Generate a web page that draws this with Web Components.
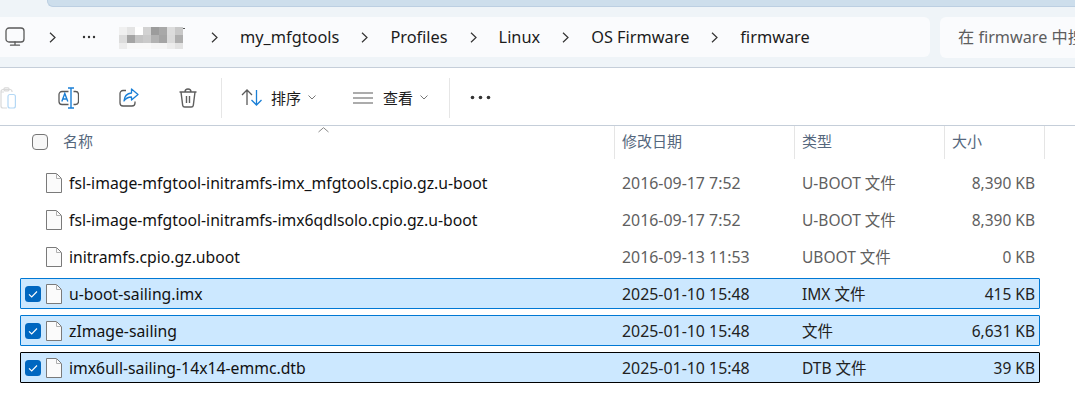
<!DOCTYPE html>
<html lang="zh">
<head>
<meta charset="utf-8">
<title>firmware</title>
<style>
    html, body { margin: 0; padding: 0; background: #fff; overflow: hidden; }
    body { width: 1075px; height: 420px; font-family: "Noto Sans", "Noto Sans CJK SC", sans-serif; }
</style>
</head>
<body>
<explorer-nav>
    <crumb-bar>
        <svg slot="home" width="20" height="20" viewBox="0 0 20 20" fill="none" stroke="#5a5a5a" stroke-width="1.3"><rect x="1" y="1" width="18" height="14" rx="3"/><path d="M10 15v3M5.5 18.2h9" stroke-linecap="round"/></svg>
        <bar-chevron></bar-chevron>
        <svg width="18" height="4" viewBox="-4 0 18 4" fill="#333"><circle cx="2" cy="2" r="1.2"/><circle cx="7" cy="2" r="1.2"/><circle cx="12" cy="2" r="1.2"/></svg>
        <blur-patch></blur-patch>
        <bar-chevron></bar-chevron>
        <span>my_mfgtools</span>
        <bar-chevron></bar-chevron>
        <span>Profiles</span>
        <bar-chevron></bar-chevron>
        <span>Linux</span>
        <bar-chevron></bar-chevron>
        <span>OS Firmware</span>
        <bar-chevron></bar-chevron>
        <span>firmware</span>
    </crumb-bar>
    <search-box>在 firmware 中搜索</search-box>
</explorer-nav>

<explorer-toolbar>
    <tool-btn>
        <svg width="17" height="22" viewBox="5 0 17 22" fill="none" stroke-width="1.2"><path d="M6 5h3M17 5V4.5A2 2 0 0 0 15 2.5H8a2 2 0 0 0-2 2V19a2 2 0 0 0 2 2h4" stroke="#d9d9d9"/><rect x="9" y="0.8" width="5" height="3" rx="1" stroke="#d9d9d9"/><rect x="14" y="7.5" width="7.4" height="13.5" rx="2" stroke="#b4d8f5" transform="translate(-1 0)"/></svg>
    </tool-btn>
    <tool-btn gap="41">
        <svg width="21" height="22" viewBox="0 0 21 22" fill="none" stroke-width="1.3"><path d="M10.500 4.500H4a3 3 0 0 0-3 3v7a3 3 0 0 0 3 3h6.500M15.500 4.500h2a3 3 0 0 1 3 3v7a3 3 0 0 1-3 3h-2" stroke="#5a5a5a"/><path d="M10 1h6M13 1v20M10 21h6M3.800 14.500l3-8 3 8M4.800 12h4" stroke="#1a7fd6" stroke-width="1.400"/></svg>
    </tool-btn>
    <tool-btn gap="40">
        <svg width="20" height="19" viewBox="0 0 20 19" fill="none" stroke-width="1.3"><path d="M7 2.500H4a3 3 0 0 0-3 3V15a3 3 0 0 0 3 3h9a3 3 0 0 0 3-3v-1.500" stroke="#5a5a5a"/><path d="M12.500 1l6.500 5.500-6.500 5.500V9C9 9 7 10 5 13c.300-4.500 3-7.500 7.500-8z" stroke="#1a7fd6" stroke-linejoin="round"/></svg>
    </tool-btn>
    <tool-btn gap="40">
        <svg width="18" height="20" viewBox="0 0 18 20" fill="none" stroke="#5f5f5f" stroke-width="1.400"><path d="M.5 4h17M6 4c0-4 6-4 6 0M2 4l1.700 13.300a2 2 0 0 0 2 1.700h6.600a2 2 0 0 0 2-1.700L16 4M7.500 8v7M10.500 8v7"/></svg>
    </tool-btn>
    <tool-sep gap="24"></tool-sep>
    <tool-btn gap="19" label="排序" lm="8" caret>
        <svg width="22" height="17" viewBox="0 0 22 17" fill="none" stroke-width="1.300"><path d="M6 1v15M1 6l5-5 5 5" stroke="#5a5a5a"/><path d="M15.500 1v15M10.500 11l5 5 5-5" stroke="#1a7fd6"/></svg>
    </tool-btn>
    <tool-btn gap="37" label="查看" lm="10" caret>
        <svg width="20" height="12" viewBox="0 0 20 12" fill="none" stroke="#5a5a5a" stroke-width="1.200"><path d="M0 1h20M0 6h20M0 11h20"/></svg>
    </tool-btn>
    <tool-sep gap="21"></tool-sep>
    <tool-btn gap="20">
        <svg width="21" height="5" viewBox="0 0 21 5" fill="#333"><circle cx="2.500" cy="2.500" r="1.800"/><circle cx="10.500" cy="2.500" r="1.800"/><circle cx="18.500" cy="2.500" r="1.800"/></svg>
    </tool-btn>
</explorer-toolbar>

<list-header></list-header>

<file-list>
    <file-row name="fsl-image-mfgtool-initramfs-imx_mfgtools.cpio.gz.u-boot" date="2016-09-17 7:52" kind="U-BOOT 文件" size="8,390 KB"></file-row>
    <file-row name="fsl-image-mfgtool-initramfs-imx6qdlsolo.cpio.gz.u-boot" date="2016-09-17 7:52" kind="U-BOOT 文件" size="8,390 KB"></file-row>
    <file-row name="initramfs.cpio.gz.uboot" date="2016-09-13 11:53" kind="UBOOT 文件" size="0 KB"></file-row>
    <file-row selected name="u-boot-sailing.imx" date="2025-01-10 15:48" kind="IMX 文件" size="415 KB"></file-row>
    <file-row selected name="zImage-sailing" date="2025-01-10 15:48" kind="文件" size="6,631 KB"></file-row>
    <file-row selected focused name="imx6ull-sailing-14x14-emmc.dtb" date="2025-01-10 15:48" kind="DTB 文件" size="39 KB"></file-row>
</file-list>

<script>
const FONT = '"Noto Sans", "Noto Sans CJK SC", sans-serif';

class ExplorerNav extends HTMLElement {
    constructor() {
        super();
        this.attachShadow({ mode: 'open' });
        this.shadowRoot.innerHTML = `
            <style>
                :host { display: block; height: 68px; box-sizing: border-box; background: #eff4f8; border-bottom: 1px solid #c5ced9; }
                .strip { height: 7px; margin-left: 47px; box-sizing: border-box; background: #cddeec; border-bottom: 1px solid #bccfe2; border-left: 1px solid #bccfe2; border-bottom-left-radius: 6px; }
                .row { display: flex; gap: 10px; margin-top: 10px; }
            </style>
            <div class="strip"></div>
            <div class="row"><slot></slot></div>
        `;
    }
}

class CrumbBar extends HTMLElement {
    constructor() {
        super();
        this.attachShadow({ mode: 'open' });
        this.shadowRoot.innerHTML = `
            <style>
                :host { display: flex; align-items: center; width: 930px; height: 40px; box-sizing: border-box; padding-left: 5px; background: #fafbfd; border-radius: 0 6px 6px 0; font: 16.32px ${FONT}; color: #1c1c1c; }
                .home { display: flex; margin-right: 24px; }
                .items { display: flex; align-items: center; gap: 22px; }
            </style>
            <div class="home"><slot name="home"></slot></div>
            <div class="items"><slot></slot></div>
        `;
    }
}

class BarChevron extends HTMLElement {
    constructor() {
        super();
        this.attachShadow({ mode: 'open' });
        this.shadowRoot.innerHTML = `
            <style>:host { display: flex; }</style>
            <svg width="7" height="11" viewBox="0 0 7 11" fill="none" stroke="#333" stroke-width="1.200"><path d="M1 .8l5 4.700-5 4.700"/></svg>
        `;
    }
}

// mosaic over the hidden folder name
class BlurPatch extends HTMLElement {
    constructor() {
        super();
        this.attachShadow({ mode: 'open' });
        const cells = [
            ['#f0f0f0','#e4e4e4','#fff','#d2d2d2','#9c9c9c','#a8a8a8','#dcdcdc','#c8c8c8'],
            ['#dcdcdc','#a4a4a4','#c4c4c4','#cacaca','#b2b2b2','#a4a4a4','#dadada','#aeaeae'],
            ['#ececec','#f8f8f8','#f8f8f8','#f8f8f8','#f4f4f4','#f4f4f4','#ececec','#e2e2e2'],
        ];
        const rects = cells.map((row, y) => row.map((c, x) => `<rect x="${x * 8}" y="${y * 8}" width="8" height="8" fill="${c}"/>`).join('')).join('');
        this.shadowRoot.innerHTML = `
            <style>:host { display: flex; width: 71px; padding-top: 1px; }</style>
            <svg width="71" height="22" viewBox="-1 0 71 22" shape-rendering="crispEdges">${rects}<rect x="64" y="1" width="2" height="1" fill="#555"/></svg>
        `;
    }
}

class SearchBox extends HTMLElement {
    constructor() {
        super();
        this.attachShadow({ mode: 'open' });
        this.shadowRoot.innerHTML = `
            <style>
                :host { display: block; flex: 1; min-width: 0; height: 41px; box-sizing: border-box; padding-left: 18px; background: #fafbfd; border-radius: 6px 0 0 6px; font: 16.2px/40px ${FONT}; color: #5d5d5d; white-space: nowrap; overflow: hidden; }
            </style>
            <slot></slot>
        `;
    }
}

class ExplorerToolbar extends HTMLElement {
    constructor() {
        super();
        this.attachShadow({ mode: 'open' });
        this.shadowRoot.innerHTML = `
            <style>
                :host { display: flex; align-items: center; height: 58px; padding-top: 2px; box-sizing: border-box; border-bottom: 1px solid #c5ced9; }
            </style>
            <slot></slot>
        `;
    }
}

class ToolBtn extends HTMLElement {
    constructor() {
        super();
        this.attachShadow({ mode: 'open' });
        const label = this.getAttribute('label');
        const caret = this.hasAttribute('caret');
        this.shadowRoot.innerHTML = `
            <style>
                :host { display: flex; align-items: center; margin-left: ${this.getAttribute('gap') || 0}px; font: 15px ${FONT}; color: #1c1c1c; }
                .label { margin-left: ${this.getAttribute('lm') || 9}px; }
                svg { margin-left: 7px; }
                slot::slotted(svg) { display: block; }
            </style>
            <slot></slot>
            ${label ? `<span class="label">${label}</span>` : ''}
            ${caret ? `<svg width="8" height="5" viewBox="0 0 8 5" fill="none" stroke="#777" stroke-width="1"><path d="M.5.5L4 4 7.500.5"/></svg>` : ''}
        `;
    }
}

class ToolSep extends HTMLElement {
    constructor() {
        super();
        this.attachShadow({ mode: 'open' });
        this.shadowRoot.innerHTML = `
            <style>:host { display: block; width: 1px; height: 40px; margin-left: ${this.getAttribute('gap') || 0}px; background: #e6e6e6; }</style>
        `;
    }
}

class ListHeader extends HTMLElement {
    constructor() {
        super();
        this.attachShadow({ mode: 'open' });
        this.shadowRoot.innerHTML = `
            <style>
                :host { display: grid; position: relative; grid-template-columns: 614px 180px 150px 100px 1fr; height: 33px; font: 15px/31px ${FONT}; color: #55677d; }
                .cell { padding-left: 7px; border-left: 1px solid #e5e5e5; }
                .first { display: flex; align-items: flex-start; padding-left: 32px; }
                .box { width: 14px; height: 14px; border: 1px solid #767676; border-radius: 4px; background: #f7f7f7; margin: 8px 15px 0 0; }
                .sort { position: absolute; left: 318px; top: 1px; }
            </style>
            <div class="first"><div class="box"></div>名称</div>
            <div class="cell">修改日期</div>
            <div class="cell">类型</div>
            <div class="cell">大小</div>
            <div class="cell"></div>
            <svg class="sort" width="11" height="6" viewBox="0 0 11 6" fill="none" stroke="#888" stroke-width="1"><path d="M.5 5L5.500 .7 10.500 5"/></svg>
        `;
    }
}

class FileList extends HTMLElement {
    constructor() {
        super();
        this.attachShadow({ mode: 'open' });
        this.shadowRoot.innerHTML = `
            <style>:host { display: flex; flex-direction: column; gap: 6px; margin-left: 20px; width: 1020px; padding-top: 8px; }</style>
            <slot></slot>
        `;
    }
}

class FileRow extends HTMLElement {
    constructor() {
        super();
        this.attachShadow({ mode: 'open' });
        const a = n => this.getAttribute(n);
        const selected = this.hasAttribute('selected');
        this.shadowRoot.innerHTML = `
            <style>
                :host { display: grid; grid-template-columns: 601px 180px 150px 1fr; align-items: center; height: 31px; box-sizing: border-box; border: 1px solid transparent; border-radius: 1px; font: 15px ${FONT}; color: #5f5f5f; }
                :host([selected]) { background: #cce8ff; border-color: #0078d4; color: #222; }
                :host([focused]) { border-color: #000; }
                .name { display: flex; align-items: center; color: #111; font-size: 15.75px; white-space: nowrap; }
                .check { width: 16px; height: 16px; margin-left: 4px; margin-right: 5px; }
                .file { margin-right: 7px; }
                .date { font-size: 15.9px; }
                .kind { font-size: 15.5px; }
                .size { text-align: right; padding-right: 4px; font-size: 15.5px; }
            </style>
            <div class="name">
                ${selected
                    ? `<svg class="check" viewBox="0 0 16 16"><rect width="16" height="16" rx="3.500" fill="#0067c0"/><path d="M4 8.300l2.700 2.700L12 5.500" fill="none" stroke="#fff" stroke-width="1.100"/></svg>`
                    : `<div class="check"></div>`}
                <svg class="file" width="16" height="20" viewBox="0 0 16 20"><path d="M.5.5h10l5 5v14H.5z" fill="#fbfbfb" stroke="#7a7a7a"/><path d="M10.500.5v5h5" fill="none" stroke="#b0b0b0"/></svg>
                <span>${a('name')}</span>
            </div>
            <div class="date">${a('date')}</div>
            <div class="kind">${a('kind')}</div>
            <div class="size">${a('size')}</div>
        `;
    }
}

customElements.define('explorer-nav', ExplorerNav);
customElements.define('crumb-bar', CrumbBar);
customElements.define('bar-chevron', BarChevron);
customElements.define('blur-patch', BlurPatch);
customElements.define('search-box', SearchBox);
customElements.define('explorer-toolbar', ExplorerToolbar);
customElements.define('tool-btn', ToolBtn);
customElements.define('tool-sep', ToolSep);
customElements.define('list-header', ListHeader);
customElements.define('file-list', FileList);
customElements.define('file-row', FileRow);
</script>
</body>
</html>
